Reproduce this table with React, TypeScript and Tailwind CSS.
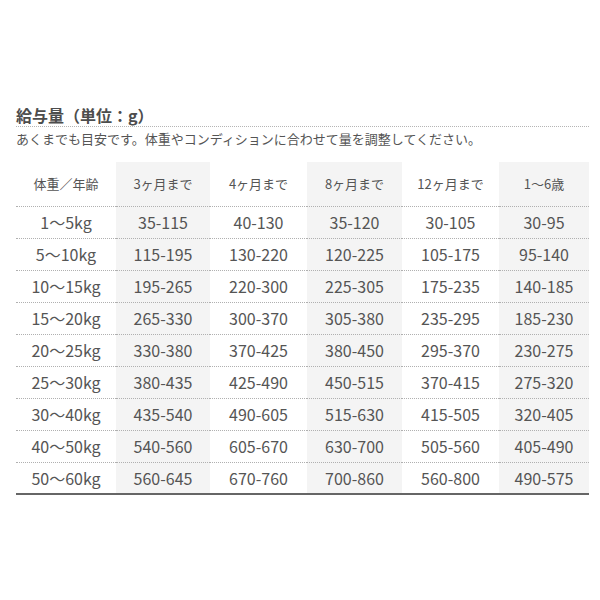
import React from "react";

const headers = ["体重／年齢", "3ヶ月まで", "4ヶ月まで", "8ヶ月まで", "12ヶ月まで", "1〜6歳"];
const rows = [
  ["1〜5kg", "35-115", "40-130", "35-120", "30-105", "30-95"],
  ["5〜10kg", "115-195", "130-220", "120-225", "105-175", "95-140"],
  ["10〜15kg", "195-265", "220-300", "225-305", "175-235", "140-185"],
  ["15〜20kg", "265-330", "300-370", "305-380", "235-295", "185-230"],
  ["20〜25kg", "330-380", "370-425", "380-450", "295-370", "230-275"],
  ["25〜30kg", "380-435", "425-490", "450-515", "370-415", "275-320"],
  ["30〜40kg", "435-540", "490-605", "515-630", "415-505", "320-405"],
  ["40〜50kg", "540-560", "605-670", "630-700", "505-560", "405-490"],
  ["50〜60kg", "560-645", "670-760", "700-860", "560-800", "490-575"],
];

const widths = ["w-[100px]", "w-[94px]", "w-[97px]", "w-[95px]", "w-[97px]", "w-[90px]"];

export default function App() {
  return (
    <div
      className="w-[600px] h-[600px] bg-white pl-[16px] pr-[11px] pt-[105px] text-[#555]"
      style={{ fontFamily: '"Noto Sans CJK JP", "Noto Sans", sans-serif' }}
    >
      <div className="h-[22px] leading-[20px] text-[16px] font-bold text-[#4d4d4d] border-b border-dotted border-[#b5b5b5]">
        給与量（単位：g）
      </div>
      <div className="mt-[2px] leading-[20px] text-[13px] text-[#555]">
        あくまでも目安です。体重やコンディションに合わせて量を調整してください。
      </div>
      <table className="mt-[13px] w-[573px] table-fixed border-collapse">
        <colgroup>
          {widths.map((w, i) => (
            <col key={i} className={w} />
          ))}
        </colgroup>
        <thead>
          <tr className="h-[44px] border-b border-dotted border-[#b0b0b0]">
            {headers.map((h, i) => (
              <th
                key={i}
                className={`p-0 text-center text-[13px] font-normal text-[#555] ${i % 2 === 1 ? "bg-[#f4f4f4]" : ""}`}
              >
                {h}
              </th>
            ))}
          </tr>
        </thead>
        <tbody>
          {rows.map((r, ri) => (
            <tr
              key={ri}
              className={
                ri === rows.length - 1
                  ? "h-[32px] border-b-2 border-solid border-[#666]"
                  : "h-[32px] border-b border-dotted border-[#b0b0b0]"
              }
            >
              {r.map((c, ci) => (
                <td
                  key={ci}
                  className={`p-0 text-center text-[16px] leading-[30px] text-[#555] ${ci % 2 === 1 ? "bg-[#f4f4f4]" : ""}`}
                >
                  {c}
                </td>
              ))}
            </tr>
          ))}
        </tbody>
      </table>
    </div>
  );
}
